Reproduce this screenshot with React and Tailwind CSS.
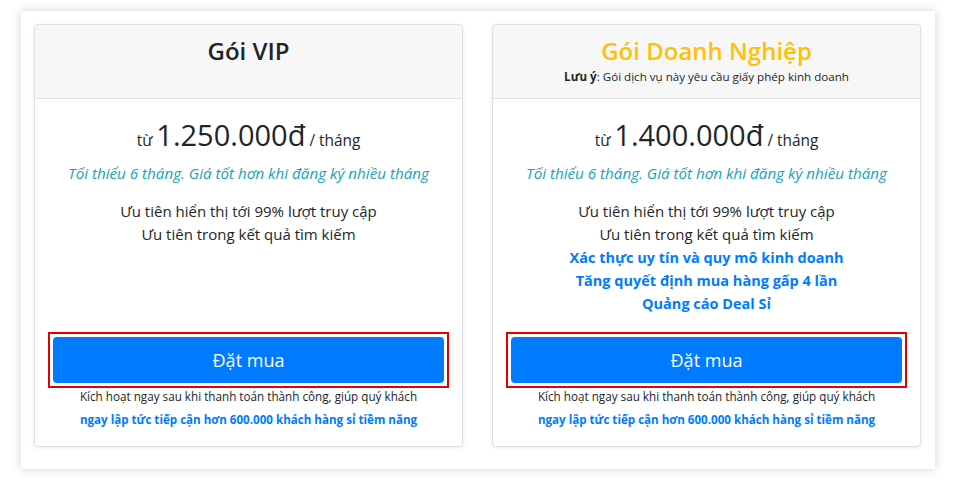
import React from "react";

function Card({ title, titleClass, note, price, extras }) {
  return (
    <div className="flex-1 flex flex-col bg-white border border-[#dfdfdf] rounded-[4px] shadow-[0_1px_4px_rgba(0,0,0,0.08)]">
      <div className="shrink-0 h-[74px] bg-[#f7f7f7] border-b border-[#dfdfdf] rounded-t-[4px] flex flex-col items-center pt-[11px]">
        <div className={"text-[24px] font-semibold leading-[29px] " + titleClass}>{title}</div>
        {note && (
          <div className="text-[11.6px] leading-[19px] text-[#212529] mt-[2px]">
            <span className="font-bold">Lưu ý</span>: {note}
          </div>
        )}
      </div>
      <div className="flex-1 flex flex-col items-center pt-[17px] pb-[17px] text-center">
        <div className="text-[29px] leading-[38px] text-[#212529] whitespace-nowrap">
          <span className="text-[15.4px] leading-none">từ </span>
          <span className="font-medium">{price}</span>
          <span className="text-[15.4px] leading-none"> / tháng</span>
        </div>
        <div className="mt-[7px] italic text-[15.2px] leading-[24px] text-[#17a2b8]">
          Tối thiểu 6 tháng. Giá tốt hơn khi đăng ký nhiều tháng
        </div>
        <div className="mt-[15px] text-[15px] leading-[23px] text-[#212529]">
          <div>Ưu tiên hiển thị tới 99% lượt truy cập</div>
          <div>Ưu tiên trong kết quả tìm kiếm</div>
          {extras.map((e) => (
            <div key={e} className="font-bold text-[14.5px] text-[#007bff]">{e}</div>
          ))}
        </div>
        <div className="mt-auto pt-[16px] w-full px-[13px]">
          <div className="border-2 border-[#e00000] p-[3px]">
            <button className="w-full h-[46px] bg-[#007bff] text-white text-[18px] rounded-[4px]">
              Đặt mua
            </button>
          </div>
        </div>
        <div className="text-[11.7px] leading-[19px] text-[#212529] mt-[-1px]">
          Kích hoạt ngay sau khi thanh toán thành công, giúp quý khách
        </div>
        <div className="text-[11.6px] leading-[19px] font-bold text-[#007bff] mt-[4px]">
          ngay lập tức tiếp cận hơn 600.000 khách hàng sỉ tiềm năng
        </div>
      </div>
    </div>
  );
}

export default function App() {
  return (
    <div className="w-[956px] h-[481px] bg-white pt-[11px] pl-[21px] font-['Open_Sans',sans-serif]">
      <div className="w-[914px] h-[458px] bg-white shadow-[0_0_10px_rgba(0,0,0,0.18)] flex gap-[29px] pl-[13px] pr-[14px] pt-[13px] pb-[22px]">
        <Card title="Gói VIP" titleClass="text-[#212529]" price="1.250.000đ" extras={[]} />
        <Card
          title="Gói Doanh Nghiệp"
          titleClass="text-[#ffc107]"
          note="Gói dịch vụ này yêu cầu giấy phép kinh doanh"
          price="1.400.000đ"
          extras={[
            "Xác thực uy tín và quy mô kinh doanh",
            "Tăng quyết định mua hàng gấp 4 lần",
            "Quảng cáo Deal Sỉ",
          ]}
        />
      </div>
    </div>
  );
}
